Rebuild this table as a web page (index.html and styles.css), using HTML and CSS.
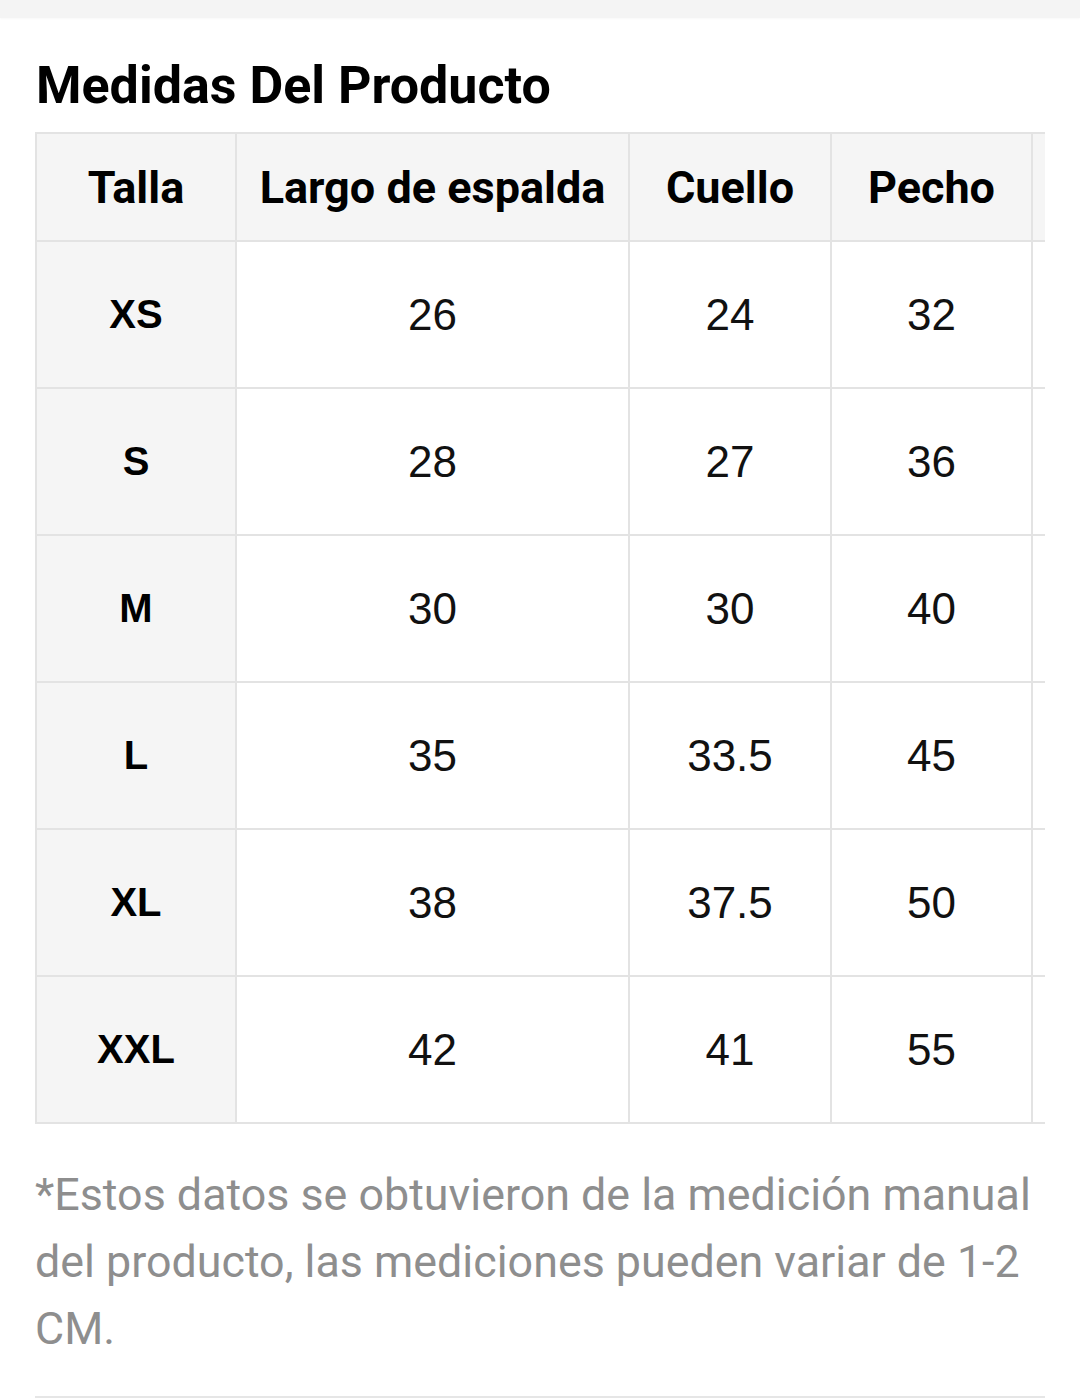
FILE: index.html
```html
<!DOCTYPE html>
<html lang="es">
<head>
<meta charset="utf-8">
<title>Medidas Del Producto</title>
<link rel="stylesheet" href="styles.css">
</head>
<body>
<div class="topband"></div>
<main class="content">
  <h1 class="title">Medidas Del Producto</h1>
  <div class="table-wrap">
    <table class="sizes">
      <colgroup>
        <col class="c-size">
        <col class="c-back">
        <col class="c-neck">
        <col class="c-chest">
        <col class="c-extra">
      </colgroup>
      <thead>
        <tr>
          <th>Talla</th>
          <th>Largo de espalda</th>
          <th>Cuello</th>
          <th>Pecho</th>
          <th></th>
        </tr>
      </thead>
      <tbody>
        <tr><td class="size">XS</td><td>26</td><td>24</td><td>32</td><td></td></tr>
        <tr><td class="size">S</td><td>28</td><td>27</td><td>36</td><td></td></tr>
        <tr><td class="size">M</td><td>30</td><td>30</td><td>40</td><td></td></tr>
        <tr><td class="size">L</td><td>35</td><td>33.5</td><td>45</td><td></td></tr>
        <tr><td class="size">XL</td><td>38</td><td>37.5</td><td>50</td><td></td></tr>
        <tr><td class="size">XXL</td><td>42</td><td>41</td><td>55</td><td></td></tr>
      </tbody>
    </table>
  </div>
  <p class="note">*Estos datos se obtuvieron de la medición manual del producto, las mediciones pueden variar de 1-2 CM.</p>
  <hr class="divider">
</main>
</body>
</html>
```
FILE: styles.css
```css
html, body {
  margin: 0;
  padding: 0;
  background: #ffffff;
}

body {
  font-family: Roboto, "Liberation Sans", sans-serif;
  color: #000;
}

.topband {
  height: 18px;
  background: #f4f4f4;
  box-shadow: 0 1px 2px rgba(0, 0, 0, 0.03);
}

.content {
  padding: 0 35px;
}

.title {
  margin: 38px 0 16px 1px;
  font-family: Roboto, sans-serif;
  font-weight: 700;
  font-size: 52px;
  line-height: 60px;
  color: #000;
}

.table-wrap {
  width: 1010px;
  overflow: hidden;
}

.sizes {
  border-collapse: collapse;
  table-layout: fixed;
  width: 1198px;
}

.c-size { width: 200px; }
.c-back { width: 393px; }
.c-neck { width: 202px; }
.c-chest { width: 201px; }
.c-extra { width: 202px; }

.sizes th,
.sizes td {
  border: 2px solid #e3e3e3;
  text-align: center;
  padding: 0;
}

.sizes thead tr {
  height: 108px;
  background: #f5f5f5;
}

.sizes th {
  font-family: Roboto, sans-serif;
  font-weight: 700;
  font-size: 45px;
  color: #000;
}

.sizes tbody tr {
  height: 147px;
}

.sizes td {
  font-family: "Liberation Sans", Arial, sans-serif;
  font-size: 44px;
  color: #111;
}

.sizes td.size {
  background: #f5f5f5;
  font-weight: 700;
  font-size: 40px;
  color: #000;
}

.note {
  margin: 37px 0 0 0;
  font-family: Roboto, sans-serif;
  font-size: 44.8px;
  line-height: 67px;
  color: #8e8e8e;
}

.divider {
  margin: 34px 0 0 0;
  border: 0;
  height: 2px;
  background: #e6e6e6;
  width: 1010px;
}
```
